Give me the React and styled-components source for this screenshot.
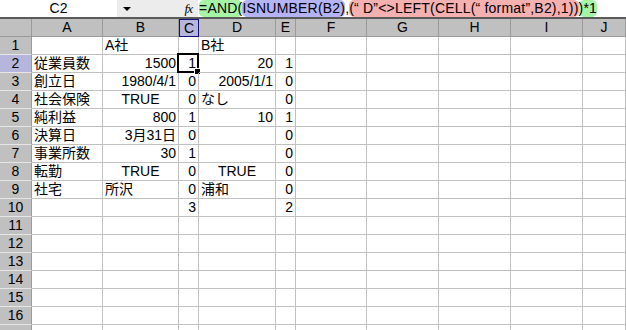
import React from 'react';
import styled, { createGlobalStyle, css } from 'styled-components';

const GlobalStyle = createGlobalStyle`
   html, body {
      margin: 0;
      padding: 0;
      background: #fff;
      overflow: hidden;
   }
   * {
      box-sizing: border-box;
   }
`;

const FONT = `"Liberation Sans", "Noto Sans CJK JP", sans-serif`;

const Window = styled.div`
   width: 626px;
   height: 330px;
   overflow: hidden;
   font-family: ${FONT};
   font-size: 14px;
   color: #000;
`;

const FormulaBar = styled.div`
   display: flex;
   align-items: center;
   height: 19px;
   border-bottom: 2px solid #5a5a5a;
   background: #fff;
`;

const NameBox = styled.div`
   width: 117px;
   height: 100%;
   display: flex;
   align-items: center;
   justify-content: center;
   line-height: 17px;
`;

const Gutter = styled.div`
   display: flex;
   align-items: center;
   width: 81px;
   height: 100%;
   background: #ececec;
   padding-left: 6px;
`;

const DropArrow = styled.span`
   width: 0;
   height: 0;
   border-left: 4px solid transparent;
   border-right: 4px solid transparent;
   border-top: 4px solid #000;
`;

const Fx = styled.span`
   margin-left: auto;
   margin-right: 6px;
   font-family: "Liberation Serif", serif;
   font-style: italic;
   font-size: 13px;
   letter-spacing: -1px;
`;

const Formula = styled.div`
   display: flex;
   align-items: center;
   height: 100%;
   padding-left: 1px;
   white-space: nowrap;
   letter-spacing: 0.2px;
`;

const tones = {
   green: '#a6f5a6',
   blue: '#b4b4f5',
   red: '#f5b0b0',
   none: 'transparent',
};

const Token = styled.span`
   background: ${(p) => tones[p.$tone]};
   border-radius: 5px;
   line-height: 17px;
`;

const Grid = styled.div`
   display: grid;
   grid-template-columns: 32px 71px 76px 20px 77px 20px 71px 72px 72px 72px 1fr;
   grid-auto-rows: 18px;
`;

const headBase = css`
   background: #c0c0c0;
   display: flex;
   align-items: center;
   justify-content: center;
   line-height: 17px;
`;

const ColHead = styled.div`
   ${headBase}
   border-right: 1px solid #9a9a9a;
   border-bottom: 1px solid #9a9a9a;
   ${(p) =>
      p.$active &&
      css`
         background: #b6b6dc;
         border: 1px solid #10107a;
      `}
`;

const RowHead = styled.div`
   ${headBase}
   border-right: 1px solid #9a9a9a;
   border-bottom: 1px solid #e6e6e6;
   ${(p) =>
      p.$active &&
      css`
         background: #b6b6dc;
      `}
`;

const Cell = styled.div`
   position: relative;
   border-right: 1px solid #c0c0c0;
   border-bottom: 1px solid #c0c0c0;
   padding: 0 2px;
   line-height: 17px;
   white-space: nowrap;
   text-align: ${(p) => p.$align || 'left'};
`;

const Cursor = styled.div`
   position: absolute;
   left: -2px;
   top: -2px;
   right: -1px;
   bottom: -1px;
   border: 2px solid #000;
   pointer-events: none;

   &::after {
      content: '';
      position: absolute;
      right: -4px;
      bottom: -4px;
      width: 5px;
      height: 5px;
      background: #000;
      border: 1px solid #fff;
   }
`;

const columns = ['A', 'B', 'C', 'D', 'E', 'F', 'G', 'H', 'I', 'J'];

const R = 'right';
const C = 'center';

// [value, align] per column A..E
const rows = [
   [[''], ['A社'], [''], ['B社'], ['']],
   [['従業員数'], ['1500', R], ['1', R], ['20', R], ['1', R]],
   [['創立日'], ['1980/4/1', R], ['0', R], ['2005/1/1', R], ['0', R]],
   [['社会保険'], ['TRUE', C], ['0', R], ['なし'], ['0', R]],
   [['純利益'], ['800', R], ['1', R], ['10', R], ['1', R]],
   [['決算日'], ['3月31日', R], ['0', R], [''], ['0', R]],
   [['事業所数'], ['30', R], ['1', R], [''], ['0', R]],
   [['転勤'], ['TRUE', C], ['0', R], ['TRUE', C], ['0', R]],
   [['社宅'], ['所沢'], ['0', R], ['浦和'], ['0', R]],
   [[''], [''], ['3', R], [''], ['2', R]],
];

function App() {
   // 16 numbered rows plus the top sliver of row 17
   const allRows = Array.from({ length: 17 }, (_, i) => rows[i] || []);

   return (
      <Window>
         <GlobalStyle />
         <FormulaBar>
            <NameBox>C2</NameBox>
            <Gutter>
               <DropArrow />
               <Fx>fx</Fx>
            </Gutter>
            <Formula>
               <Token $tone="green">=AND(</Token>
               <Token $tone="blue">ISNUMBER(B2)</Token>
               <Token $tone="none">,</Token>
               <Token $tone="red">(“ D”&lt;&gt;LEFT(CELL(“ format”,B2),1))</Token>
               <Token $tone="green">)*1</Token>
            </Formula>
         </FormulaBar>

         <Grid>
            <ColHead />
            {columns.map((c) => (
               <ColHead key={c} $active={c === 'C'}>
                  {c}
               </ColHead>
            ))}

            {allRows.map((row, r) => (
               <React.Fragment key={r}>
                  <RowHead $active={r === 1}>{r < 16 ? r + 1 : ''}</RowHead>
                  {columns.map((c, ci) => {
                     const [val, align] = row[ci] || [''];
                     return (
                        <Cell key={c} $align={align}>
                           {val}
                           {r === 1 && c === 'C' && <Cursor />}
                        </Cell>
                     );
                  })}
               </React.Fragment>
            ))}
         </Grid>
      </Window>
   );
}

export default App;
